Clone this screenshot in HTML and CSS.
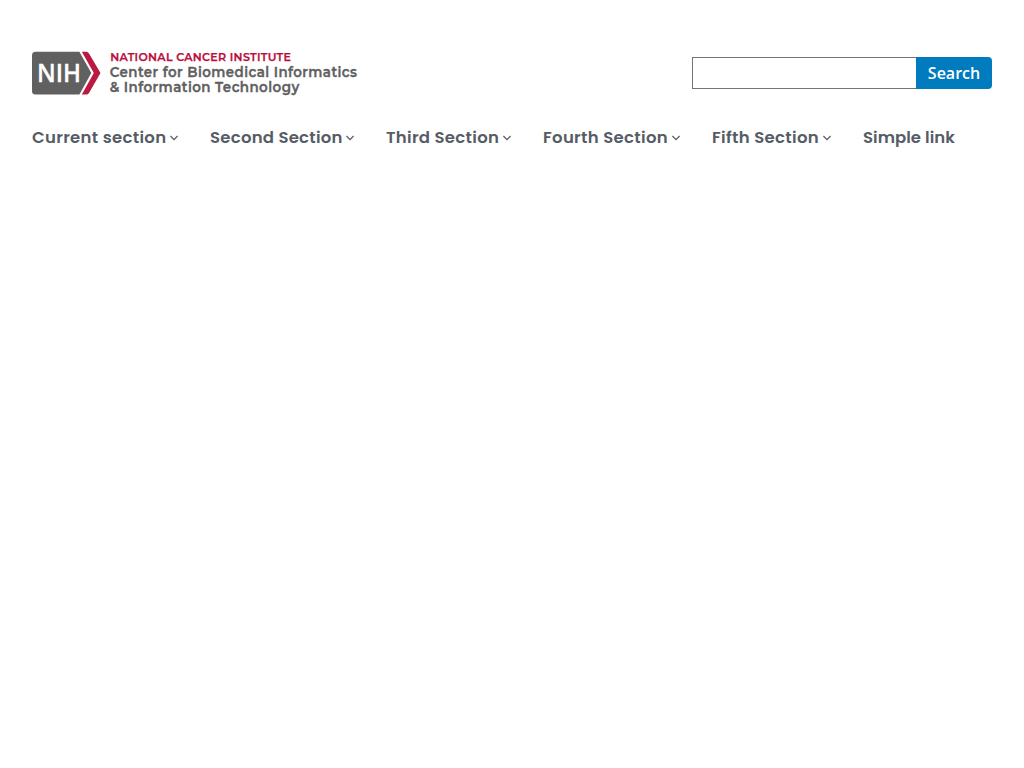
FILE: index.html
```html
<!DOCTYPE html>
<html lang="en">
<head>
<meta charset="utf-8">
<title>Center for Biomedical Informatics &amp; Information Technology</title>
<link rel="stylesheet" href="styles.css">
</head>
<body>
<header class="header">
  <div class="masthead">
    <a class="logo" aria-label="National Cancer Institute">
      <svg width="334" height="50" viewBox="32 48 334 50">
        <path fill="#606060" d="M35.5 51.7H79.4L91.3 73 79.4 94.6H35.5Q32 94.6 32 91V55.2Q32 51.7 35.5 51.7Z"/>
        <path fill="#bb1a40" d="M81.8 51.7H86.3Q88 51.7 89 53.4L100.5 73 89 92.9Q88 94.6 86.3 94.6H81.8L93.8 73Z"/>
        <text class="nih" x="37" y="82.4" textLength="44" lengthAdjust="spacingAndGlyphs">NIH</text>
        <text class="institute" x="110.2" y="61.2" textLength="181" lengthAdjust="spacingAndGlyphs">NATIONAL CANCER INSTITUTE</text>
        <text class="center" x="109.8" y="77.1" textLength="247.6" lengthAdjust="spacingAndGlyphs">Center for Biomedical Informatics</text>
        <text class="center" x="109.8" y="92.2" textLength="189.8" lengthAdjust="spacingAndGlyphs">&amp; Information Technology</text>
      </svg>
    </a>
    <form class="search">
      <input class="search-input" type="text" aria-label="Search">
      <button class="search-button" type="button">Search</button>
    </form>
  </div>
  <nav class="nav">
    <a class="item current"><span>Current section</span><svg class="chevron" viewBox="0 0 8 6"><path d="M.4 1 4 4.6 7.6 1"/></svg></a>
    <a class="item second"><span>Second Section</span><svg class="chevron" viewBox="0 0 8 6"><path d="M.4 1 4 4.6 7.6 1"/></svg></a>
    <a class="item third"><span>Third Section</span><svg class="chevron" viewBox="0 0 8 6"><path d="M.4 1 4 4.6 7.6 1"/></svg></a>
    <a class="item fourth"><span>Fourth Section</span><svg class="chevron" viewBox="0 0 8 6"><path d="M.4 1 4 4.6 7.6 1"/></svg></a>
    <a class="item fifth"><span>Fifth Section</span><svg class="chevron" viewBox="0 0 8 6"><path d="M.4 1 4 4.6 7.6 1"/></svg></a>
    <a class="item simple"><span>Simple link</span></a>
  </nav>
</header>
</body>
</html>
```
FILE: styles.css
```css
body { margin: 0; background: #fff; }
.header { padding: 48px 32px 0; }
.masthead { display: flex; justify-content: space-between; align-items: center; height: 50px; }
.logo svg { display: block; overflow: visible; }
.nih { font: 600 26px "Open Sans", sans-serif; fill: #fff; stroke: #fff; stroke-width: .3; }
.institute { font: 600 11px Montserrat, Inter, sans-serif; letter-spacing: .3px; fill: #bb0e3d; stroke: #bb0e3d; stroke-width: .25; }
.center { font: 600 14px Montserrat, Inter, sans-serif; letter-spacing: .45px; fill: #606060; stroke: #606060; stroke-width: .35; }
.search { display: flex; width: 300px; height: 32px; margin: 0; }
.search-input { box-sizing: border-box; width: 224px; height: 32px; border: 1px solid #757575; border-right: 0; border-radius: 0; background: #fff; margin: 0; padding: 0 8px; outline: 0; }
.search-button { width: 76px; height: 32px; border: 0; border-radius: 0 4px 4px 0; background: #007bbd; color: #fff; font: 600 16px/16px "Open Sans", sans-serif; padding: 0; }
.nav { display: flex; gap: 32px; margin-top: 28px; height: 24px; font: 600 16.5px/24px Poppins, Inter, sans-serif; color: #565c65; white-space: nowrap; }
.item { display: flex; align-items: center; justify-content: space-between; }
.current { width: 146px; letter-spacing: .3px; }
.second { width: 144px; letter-spacing: .24px; }
.third { width: 125px; letter-spacing: .29px; }
.fourth { width: 137px; letter-spacing: .31px; }
.fifth { width: 119px; letter-spacing: .32px; }
.simple { letter-spacing: .03px; }
.chevron { width: 8px; height: 6px; flex: none; fill: none; stroke: #565c65; stroke-width: 1.3; }
```
